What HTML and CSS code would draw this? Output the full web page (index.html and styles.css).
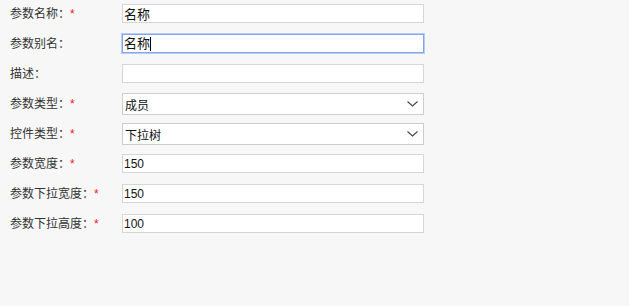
FILE: index.html
```html
<!DOCTYPE html>
<html lang="zh-CN">
	<head>
		<meta charset="UTF-8" />
		<meta name="viewport" content="width=device-width, initial-scale=1.0" />
		<title>参数设置</title>
		<link rel="stylesheet" href="styles.css">
	</head>
	<body>
		<form class="param-form">
			<div class="row">
				<label class="label">参数名称：<em class="req">*</em></label>
				<input class="field" type="text" value="名称">
			</div>
			<div class="row">
				<label class="label">参数别名：</label>
				<div class="field focused">名称<span class="caret"></span></div>
			</div>
			<div class="row">
				<label class="label">描述：</label>
				<input class="field" type="text" value="">
			</div>
			<div class="row">
				<label class="label">参数类型：<em class="req">*</em></label>
				<div class="select">
					<span class="select-text">成员</span>
					<svg class="chevron" width="11" height="6" viewBox="0 0 11 6"><path d="M0.5 0.5 L5.5 5 L10.5 0.5" fill="none" stroke="#444" stroke-width="1.1"/></svg>
				</div>
			</div>
			<div class="row">
				<label class="label">控件类型：<em class="req">*</em></label>
				<div class="select">
					<span class="select-text">下拉树</span>
					<svg class="chevron" width="11" height="6" viewBox="0 0 11 6"><path d="M0.5 0.5 L5.5 5 L10.5 0.5" fill="none" stroke="#444" stroke-width="1.1"/></svg>
				</div>
			</div>
			<div class="row">
				<label class="label">参数宽度：<em class="req">*</em></label>
				<input class="field num" type="text" value="150">
			</div>
			<div class="row">
				<label class="label">参数下拉宽度：<em class="req">*</em></label>
				<input class="field num" type="text" value="150">
			</div>
			<div class="row">
				<label class="label">参数下拉高度：<em class="req">*</em></label>
				<input class="field num" type="text" value="100">
			</div>
		</form>
	</body>
</html>
```

FILE: styles.css
```css
body {
	margin: 0;
	background-color: #f7f7f7;
	font-family: "Liberation Sans", "Noto Sans CJK SC", sans-serif;
	font-size: 12px;
	color: #222;
}
.param-form {
	padding-left: 10px;
}
.row {
	display: flex;
	align-items: flex-start;
	height: 30px;
}
.label {
	width: 112px;
	line-height: 29px;
	color: #333;
}
.req {
	font-style: normal;
	color: #f02020;
}
.field {
	box-sizing: border-box;
	width: 302px;
	height: 19px;
	margin: 4px 0 0 0;
	padding: 0 1px;
	border: 1px solid #d8d6d2;
	background-color: #fff;
	font-family: "Liberation Sans", "Noto Sans CJK SC", sans-serif;
	font-size: 13px;
	line-height: 17px;
	color: #111;
	outline: none;
}
.field.num {
	font-size: 12px;
}
.focused {
	border-color: #7fa6ee;
	box-shadow: 0 0 0 1px #b7cdf6;
	display: flex;
	align-items: center;
}
.caret {
	display: inline-block;
	width: 1px;
	height: 14px;
	background-color: #000;
}
.select {
	box-sizing: border-box;
	width: 302px;
	height: 22px;
	margin-top: 3px;
	padding: 0 5px 0 2px;
	display: flex;
	align-items: center;
	justify-content: space-between;
	border: 1px solid #cfcdc9;
	background-color: #fff;
	color: #111;
}
.chevron {
	display: block;
}
```
